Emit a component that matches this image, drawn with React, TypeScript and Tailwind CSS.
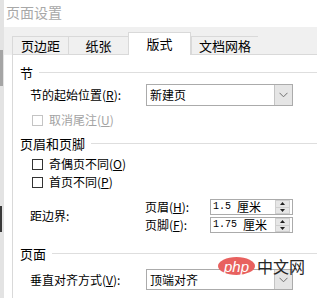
import React from 'react';

const cjk = "font-['Noto_Sans_CJK_SC','Microsoft_YaHei',sans-serif]";

function Chevron() {
  return (
    <svg width="9" height="6" viewBox="0 0 9 6">
      <path d="M0.5 0.8 L4.5 4.8 L8.5 0.8" fill="none" stroke="#707070" strokeWidth="1" />
    </svg>
  );
}

function Select({ value, h }: { value: string; h: string }) {
  return (
    <div className={`flex ${h} w-[147px] border border-[#ababab] bg-white`}>
      <div className="flex flex-1 items-center pl-[3px] text-[12px] leading-none text-black">{value}</div>
      <div className="flex w-[18px] items-center justify-center border-l border-[#c4c4c4] bg-[#e5e5e5]">
        <Chevron />
      </div>
    </div>
  );
}

function Spin({ num }: { num: string }) {
  return (
    <div className="flex h-[16px] w-[83px] items-center border border-[#ababab] bg-white pr-[2px]">
      <div className="flex flex-1 items-center pl-[2px] leading-none text-black">
        <span className="whitespace-pre font-['Liberation_Mono',monospace] text-[10px]">{num + ' '}</span>
        <span className="text-[12px]">厘米</span>
      </div>
      <div className="flex h-[14px] w-[15px] flex-col border border-[#cfcfcf] bg-[#e6e6e6]">
        <div className="flex flex-1 items-center justify-center border-b border-[#cfcfcf]">
          <svg width="5" height="3" viewBox="0 0 5 3"><path d="M2.5 0 L5 3 L0 3 Z" fill="#202020" /></svg>
        </div>
        <div className="flex flex-1 items-center justify-center">
          <svg width="5" height="3" viewBox="0 0 5 3"><path d="M0 0 L5 0 L2.5 3 Z" fill="#202020" /></svg>
        </div>
      </div>
    </div>
  );
}

function Header({ text, className }: { text: string; className: string }) {
  return (
    <div className={`flex items-center pl-[7px] ${className}`}>
      <span className="text-[13px] leading-none text-black">{text}</span>
      <div className="ml-[6px] h-px flex-1 bg-[#dedede]" />
    </div>
  );
}

function Check({ label, k, disabled, className }: { label: string; k: string; disabled?: boolean; className: string }) {
  return (
    <div className={`flex h-[16px] items-center pl-[19px] ${className}`}>
      <div className={`h-[11px] w-[11px] border bg-white ${disabled ? 'border-[#c4c4c4]' : 'border-[#333333]'}`} />
      <span className={`ml-[6px] text-[12px] leading-none ${disabled ? 'text-[#a3a3a3]' : 'text-black'}`}>
        {label}(<span className="underline">{k}</span>)
      </span>
    </div>
  );
}

export default function App() {
  const tabs = [
    { t: '页边距', w: 'w-[56px]', sel: false },
    { t: '纸张', w: 'w-[60px]', sel: false },
    { t: '版式', w: 'w-[63px]', sel: true },
    { t: '文档网格', w: 'w-[67px]', sel: false },
  ];

  return (
    <div className={`relative flex h-[298px] w-[317px] overflow-hidden bg-white ${cjk}`}>
      {/* window edge behind the dialog */}
      <div className="flex w-[4px] flex-col bg-[#e3e3e3]">
        <div className="mt-[50px] h-[36px] w-[3px] bg-[#a5a5a5]" />
        <div className="mt-[120px] h-[26px] w-[2px] bg-[#3a3a3a]" />
      </div>

      <div className="flex flex-1 flex-col">
        {/* title */}
        <div className="flex h-[27px] items-center pl-[2px] pb-[3px] text-[14px] leading-none text-[#a8a8a8]">页面设置</div>

        {/* tabs */}
        <div className="flex h-[28px] items-end bg-[#f0f0f0] pl-[8px]">
          {tabs.map((tab) =>
            tab.sel ? (
              <div
                key={tab.t}
                className={`flex h-[23px] ${tab.w} items-center justify-center border-x border-t border-[#d9d9d9] bg-white pb-[1px] text-[13px] leading-none text-black`}
              >
                {tab.t}
              </div>
            ) : (
              <div
                key={tab.t}
                className={`flex h-[19px] ${tab.w} items-center justify-center border-y border-l border-[#d9d9d9] text-[13px] leading-none text-black last:border-r`}
              >
                {tab.t}
              </div>
            )
          )}
          <div className="flex-1 border-b border-[#d9d9d9]" />
        </div>

        {/* panel */}
        <div className="ml-[8px] flex flex-1 flex-col border-l border-[#d9d9d9]">
          <Header text="节" className="mt-[8px] h-[18px]" />

          <div className="mt-[3px] flex h-[22px] items-center pl-[17px]">
            <span className="w-[116px] text-[12px] leading-none text-black">
              节的起始位置(<span className="underline">R</span>):
            </span>
            <Select value="新建页" h="h-[22px]" />
          </div>

          <Check label="取消尾注" k="U" disabled className="mt-[6px]" />

          <Header text="页眉和页脚" className="mt-[7px] h-[16px]" />
          <Check label="奇偶页不同" k="O" className="mt-[5px]" />
          <Check label="首页不同" k="P" className="mt-[2px]" />

          <div className="mt-[9px] flex items-center pl-[17px]">
            <span className="w-[115px] text-[12px] leading-none text-black">距边界:</span>
            <div className="flex flex-col gap-[2px]">
              <div className="flex items-center">
                <span className="w-[65px] text-[12px] leading-none text-black">
                  页眉(<span className="underline">H</span>):
                </span>
                <Spin num="1.5" />
              </div>
              <div className="flex items-center">
                <span className="w-[65px] text-[12px] leading-none text-black">
                  页脚(<span className="underline">F</span>):
                </span>
                <Spin num="1.75" />
              </div>
            </div>
          </div>

          <Header text="页面" className="mt-[12px] h-[16px]" />

          <div className="mt-[8px] flex h-[21px] items-center pl-[17px]">
            <span className="w-[116px] text-[12px] leading-none text-black">
              垂直对齐方式(<span className="underline">V</span>):
            </span>
            <Select value="顶端对齐" h="h-[21px]" />
          </div>
        </div>
      </div>

      {/* watermark */}
      <div className="absolute left-[218px] top-[257px] flex items-center">
        <div className="flex h-[18px] w-[37px] items-center justify-center rounded-[50%] bg-[#e8615f]">
          <span className="font-['Liberation_Sans',sans-serif] text-[15px] italic leading-none text-white">php</span>
        </div>
        <span className="ml-[2px] text-[16px] leading-none text-[#262626]">中文网</span>
      </div>
    </div>
  );
}
